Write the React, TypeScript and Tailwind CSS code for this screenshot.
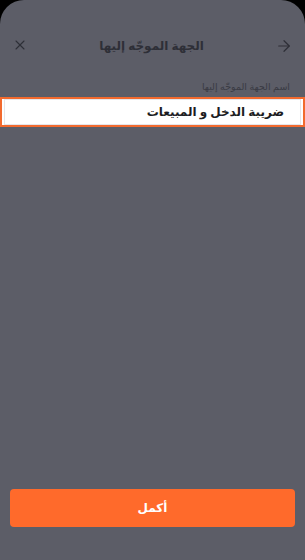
import { ArrowRight, X } from "lucide-react";

export default function App() {
  return (
    <div className="h-[560px] w-[305px] bg-black" style={{ fontFamily: '"Noto Sans", "DejaVu Sans", sans-serif' }}>
      <div dir="rtl" className="flex h-full flex-col rounded-t-[24px] bg-[#5c5d67]">
        <div className="flex h-[94px] items-start justify-between px-[12px] pt-[37px]">
          <button className="text-[#2e2f37]">
            <ArrowRight size={18} strokeWidth={1.6} />
          </button>
          <div className="text-[12px] font-bold text-[#2e2f37]">الجهة الموجّه إليها</div>
          <button className="text-[#2e2f37]">
            <X size={16} strokeWidth={1.6} />
          </button>
        </div>

        <div className="-mt-[14px] pr-[15px] text-[9.5px] text-[#3a3b44]">اسم الجهة الموجّه إليها</div>

        <div className="mt-[3px] border-2 border-[#f26a2e] bg-white">
          <div className="mx-[2px] flex h-[26px] items-center bg-white px-[17px] text-[12px] font-bold text-[#1d1d22] shadow-[inset_0_0_0_1px_#e6e6ea]">
            ضريبة الدخل و المبيعات
          </div>
        </div>

        <div className="flex-1" />

        <div className="px-[10px] pb-[33px]">
          <button className="flex h-[38px] w-full items-center justify-center rounded-[4px] bg-[#ff6a2b] text-[12px] font-bold text-white">
            أكمل
          </button>
        </div>
      </div>
    </div>
  );
}
